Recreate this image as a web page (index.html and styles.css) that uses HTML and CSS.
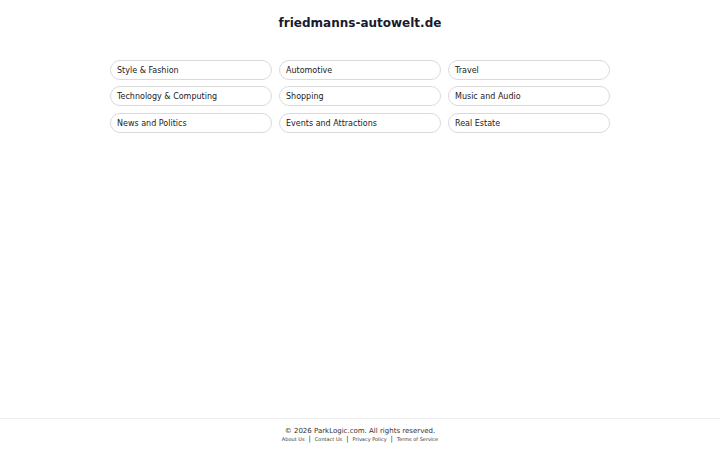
FILE: index.html
```html
<!DOCTYPE html>
<html>
<head>
<meta charset="utf-8">
<link rel="stylesheet" href="styles.css">
</head>
<body>
<div class="page">
  <main class="main">
    <h1 class="title">friedmanns-autowelt.de</h1>
    <div class="grid">
      <a class="pill">Style &amp; Fashion</a>
      <a class="pill">Automotive</a>
      <a class="pill">Travel</a>
      <a class="pill">Technology &amp; Computing</a>
      <a class="pill">Shopping</a>
      <a class="pill">Music and Audio</a>
      <a class="pill">News and Politics</a>
      <a class="pill">Events and Attractions</a>
      <a class="pill">Real Estate</a>
    </div>
  </main>
  <footer class="footer">
    <div class="copy">© 2026 ParkLogic.com. All rights reserved.</div>
    <div class="links">
      <a>About Us</a><span class="sep">|</span><a>Contact Us</a><span class="sep">|</span><a>Privacy Policy</a><span class="sep">|</span><a>Terms of Service</a>
    </div>
  </footer>
</div>
</body>
</html>
```
FILE: styles.css
```css
html, body {
  margin: 0;
  padding: 0;
  background: #fff;
}
body {
  font-family: "DejaVu Sans", sans-serif;
  color: #222;
}
.page {
  display: flex;
  flex-direction: column;
  height: 450px;
}
.main {
  flex: 1;
  display: flex;
  flex-direction: column;
  align-items: center;
}
.title {
  margin: 15px 0 0;
  font-size: 12px;
  font-weight: bold;
  color: #1a1a2e;
  line-height: 16px;
}
.grid {
  margin-top: 29px;
  width: 500px;
  display: grid;
  grid-template-columns: repeat(3, 1fr);
  column-gap: 7px;
  row-gap: 6.3px;
}
.pill {
  display: block;
  height: 20px;
  box-sizing: border-box;
  border: 1px solid #dadada;
  border-radius: 10px;
  padding: 1px 6px 0;
  font-size: 8px;
  line-height: 17px;
  color: #222;
}
.footer {
  border-top: 1px solid #eee;
  height: 32px;
  text-align: center;
  padding-top: 8px;
  box-sizing: border-box;
}
.copy {
  font-size: 7px;
  color: #333;
  line-height: 9px;
}
.links {
  font-size: 5px;
  color: #333;
  line-height: 7px;
}
.sep {
  margin: 0 4px;
  font-size: 7px;
}
```
